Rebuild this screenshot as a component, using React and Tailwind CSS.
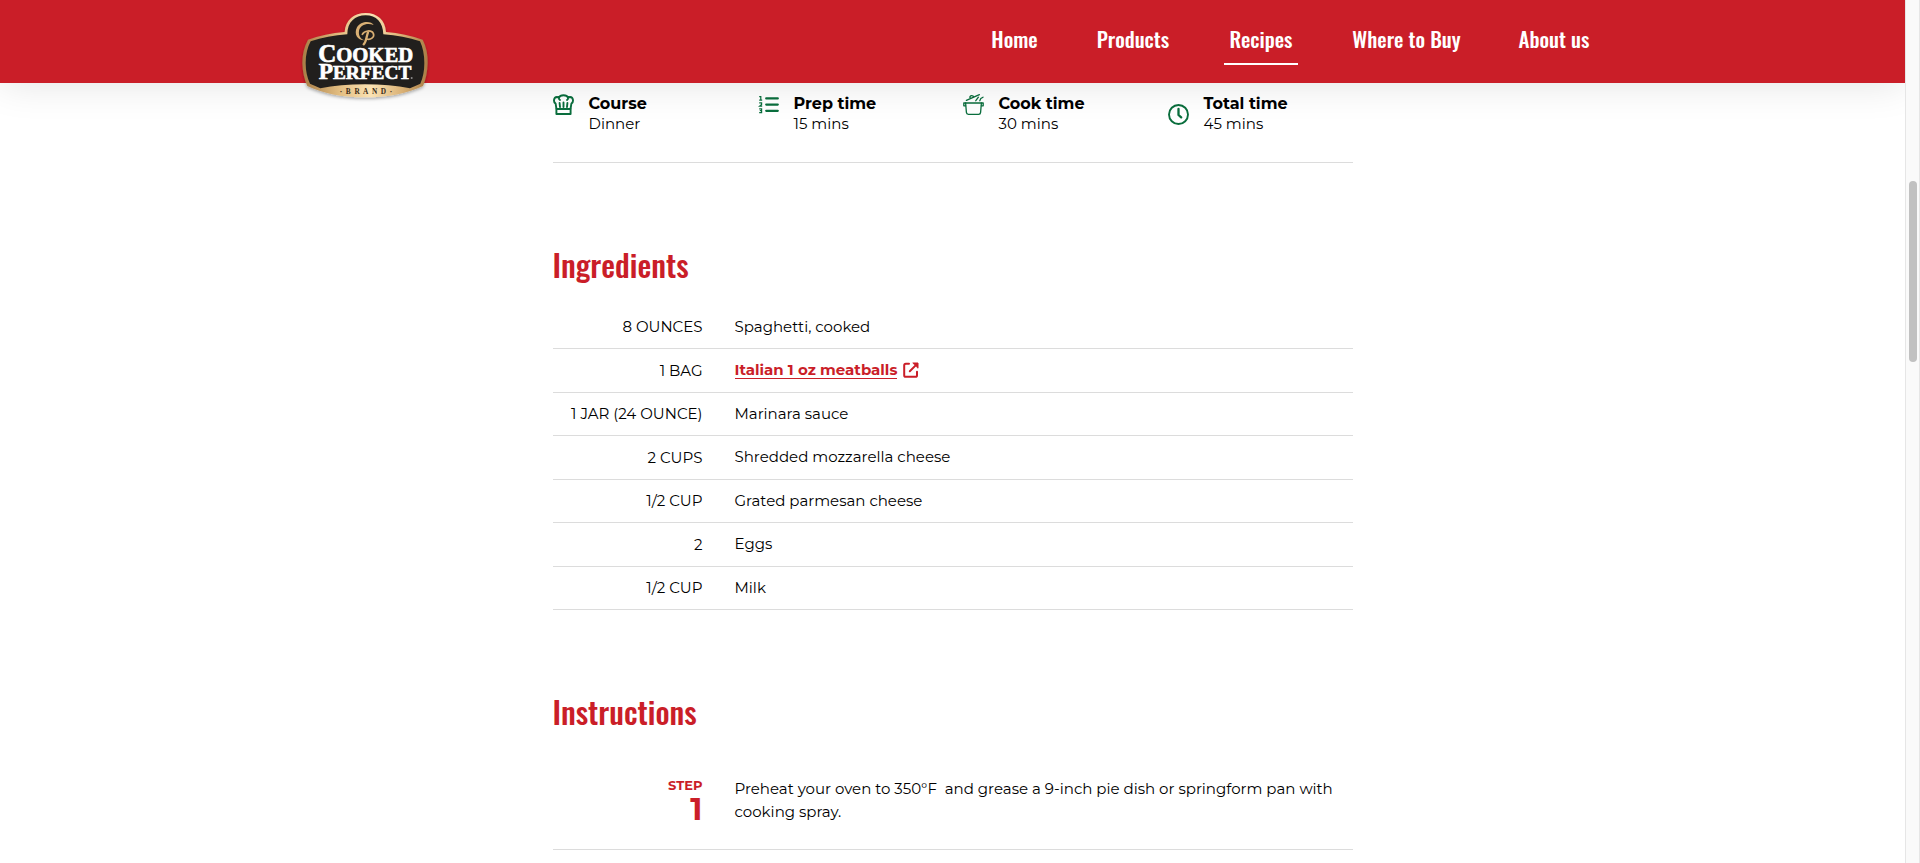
import React from 'react';

const navItems = [
  { label: 'Home', width: 'w-[55px]' },
  { label: 'Products', width: 'w-[82px]' },
  { label: 'Recipes', width: 'w-[74px]', active: true },
  { label: 'Where to Buy', width: 'w-[117px]' },
  { label: 'About us', width: 'w-[78px]' },
];

const ingredients = [
  { amount: '8 ounces', name: 'Spaghetti, cooked' },
  { amount: '1 bag', name: 'Italian 1 oz meatballs', link: true },
  { amount: '1 jar (24 ounce)', name: 'Marinara sauce' },
  { amount: '2 cups', name: 'Shredded mozzarella cheese' },
  { amount: '1/2 cup', name: 'Grated parmesan cheese' },
  { amount: '2', name: 'Eggs' },
  { amount: '1/2 cup', name: 'Milk' },
];

function Logo() {
  return (
    <svg viewBox="30 30 390 282" className="w-[130px] h-[94px]" role="img" aria-label="Cooked Perfect Brand">
      <defs>
        <linearGradient id="gold" x1="0" y1="0" x2="1" y2="0">
          <stop offset="0" stopColor="#a87d45" />
          <stop offset="0.3" stopColor="#e3be82" />
          <stop offset="0.55" stopColor="#fbe3b4" />
          <stop offset="0.8" stopColor="#d9b074" />
          <stop offset="1" stopColor="#a87d45" />
        </linearGradient>
        <filter id="drop" x="-10%" y="-10%" width="120%" height="125%">
          <feDropShadow dx="0" dy="5" stdDeviation="5" floodColor="#000" floodOpacity="0.3" />
        </filter>
      </defs>
      <path
        filter="url(#drop)"
        fill="url(#gold)"
        d="M54 119 Q105 101 164 96 C166 60 192 39 227 39 C262 39 286 61 288 96 Q346 101 398 119 Q414 150 413 189 Q412 228 399 258 C354 280 294 292 225 292 C156 292 97 280 52 258 Q38 228 37 189 Q37 150 54 119 Z"
      />
      <path
        fill="#211f1d"
        d="M62 124 Q112 108 172 103 C172 66 195 46 227 46 C259 46 279 67 280 103 Q340 108 390 124 Q403 152 403 189 Q403 224 391 251 L360 265 Q300 253 225 253 Q150 253 91 265 L60 251 Q47 224 47 189 Q47 152 62 124 Z"
      />
      <path fill="#d9b074" d="M251 75 C244 62 212 62 201 82 C190 104 204 122 224 121 C211 117 205 106 207 93 C210 75 231 68 251 75 Z" />
      <path fill="none" stroke="#d9b074" strokeWidth="5" strokeLinecap="round" d="M217 103 C223 91 244 89 250 100 C255 112 241 121 230 117" />
      <path fill="none" stroke="#d9b074" strokeWidth="7" strokeLinecap="round" d="M234 97 C229 110 229 126 221 133" />
      <g fill="#fff" fontFamily="'Liberation Serif', serif" fontWeight="700">
        <text x="227" y="185" textAnchor="middle" fontSize="75" stroke="#fff" strokeWidth="2">
          C<tspan fontSize="62">OOKED</tspan>
        </text>
        <text x="225" y="237" textAnchor="middle" fontSize="70" stroke="#fff" strokeWidth="2">
          P<tspan fontSize="58">ERFECT</tspan>
        </text>
      </g>
      <circle cx="365" cy="234" r="3" fill="#8d8c8b" />
      <text x="228" y="281" textAnchor="middle" fontSize="22" fontWeight="700" fill="#3a2b17" fontFamily="'Liberation Serif', serif">
        ·&nbsp; B&nbsp; R&nbsp; A&nbsp; N&nbsp; D&nbsp; ·
      </text>
    </svg>
  );
}

function ChefHatIcon() {
  return (
    <svg viewBox="0 0 21 21" className="size-[21px] shrink-0" fill="none" stroke="#0a6e3d" strokeWidth="1.9" strokeLinejoin="round" strokeLinecap="round">
      <path d="M3.4 14.5 L2.6 9.6 C0.3 8.2 0.3 3.3 4 3 C4.8 3 5.4 3.2 5.9 3.6 C7.2 0.4 13.8 0.4 15.1 3.6 C15.6 3.2 16.2 3 17 3 C20.7 3.3 20.7 8.2 18.4 9.6 L17.6 14.5" />
      <path d="M5.9 3.6 C5.8 4.6 6.2 5.5 7 6 M15.1 3.6 C15.2 4.6 14.8 5.5 14 6" />
      <path d="M6.6 9 L7 13 M10.5 8.4 V13 M14.4 9 L14 13" />
      <path d="M3.4 15 H17.6 V20 H3.4 Z" />
    </svg>
  );
}

function ListIcon() {
  return (
    <svg viewBox="0 0 21 21" className="size-[21px] shrink-0" fill="none" stroke="#0a6e3d">
      <path strokeWidth="2.2" strokeLinecap="round" d="M8.2 4.4 H19.8 M8.2 10.6 H19.8 M8.2 16.8 H19.8" />
      <path strokeWidth="1.2" d="M1.2 2.6 H2.8 V6.2 M1.2 6.2 H4.2 M1.2 8.8 H3.6 V10.4 L1.6 12.2 H4.2 M1.2 14.8 H3.6 V18.6 H1.2 M1.8 16.7 H3.6" />
    </svg>
  );
}

function PotIcon() {
  return (
    <svg viewBox="0 0 21 21" className="size-[21px] shrink-0" fill="none" stroke="#0a6e3d" strokeWidth="1.3" strokeLinejoin="round" strokeLinecap="round">
      <path d="M0.8 9 H20.2 V11.8 H18.4 M0.8 9 V11.8 H2.6" />
      <path d="M2.6 9 L3.4 18.4 C3.5 19.7 4.3 20.3 5.4 20.3 H15.6 C16.7 20.3 17.5 19.7 17.6 18.4 L18.4 9" />
      <path d="M3.4 6.4 L16.4 0.7 M7.4 4.6 C6.2 2.8 7.5 1.4 9 1.6 C10.1 1.7 10.5 2.5 10.2 3.3" />
      <path d="M12.8 6.7 L15.4 3.2 M16.8 6.7 L17.8 4.5 L20 3.2" />
    </svg>
  );
}

function ClockIcon() {
  return (
    <svg viewBox="0 0 21 21" className="size-[21px] shrink-0" fill="none" stroke="#0a6e3d" strokeLinecap="round" strokeLinejoin="round">
      <circle cx="10.5" cy="10.5" r="9.5" strokeWidth="1.9" />
      <path d="M10.5 5 V11 L13.2 13.4" strokeWidth="2.3" />
    </svg>
  );
}

function ExternalIcon() {
  return (
    <svg viewBox="0 0 16 16" className="size-4" fill="none" stroke="#ca1e28" strokeWidth="2" strokeLinecap="round" strokeLinejoin="round">
      <path d="M6 1.8 H2.8 Q1.2 1.8 1.2 3.4 V13.2 Q1.2 14.8 2.8 14.8 H12.4 Q14 14.8 14 13.2 V9.8" />
      <path d="M6.8 9.2 L13.4 2.6" />
      <path d="M10.2 1 H15 V5.8 Z" fill="#ca1e28" strokeWidth="1" />
    </svg>
  );
}

const facts = [
  { title: 'Course', value: 'Dinner', icon: <ChefHatIcon />, align: 'items-start' },
  { title: 'Prep time', value: '15 mins', icon: <ListIcon />, align: 'items-start' },
  { title: 'Cook time', value: '30 mins', icon: <PotIcon />, align: 'items-start' },
  { title: 'Total time', value: '45 mins', icon: <ClockIcon />, align: 'items-center' },
];

function Header() {
  return (
    <header className="relative z-10 h-[83px] bg-[#ca1e28] shadow-[0_0_40px_rgba(0,0,0,0.12)]">
      <div className="max-w-[1305px] mx-auto flex items-start justify-between pr-3">
        <a href="#" className="block pt-[10px]">
          <Logo />
        </a>
        <nav className="flex gap-[50px] pt-6 font-['Oswald','Liberation_Sans_Narrow',sans-serif] text-[21px] leading-[30px] font-medium text-white">
          {navItems.map((item) => (
            <a
              key={item.label}
              href="#"
              className={`${item.width} flex justify-center pb-[9px] whitespace-nowrap border-b-2 ${item.active ? 'border-white' : 'border-transparent'}`}
            >
              {item.label}
            </a>
          ))}
        </nav>
      </div>
    </header>
  );
}

function SectionTitle({ children }) {
  return (
    <h2 className="font-['Oswald','Liberation_Sans_Narrow',sans-serif] text-[31px] leading-10 font-medium text-[#ca1e28]">
      {children}
    </h2>
  );
}

export default function App() {
  return (
    <div className="flex min-h-screen bg-white font-['Montserrat','Inter',sans-serif] text-[15px] text-black">
      <div className="flex-1 min-w-0 overflow-hidden">
        <Header />

        <main className="max-w-[800px] mx-auto">
          <section className="grid grid-cols-4 gap-5 pt-[11px] pb-7 border-b border-[#dcdcdc]">
            {facts.map((fact) => (
              <div key={fact.title} className={`flex gap-[15px] leading-5 ${fact.align}`}>
                {fact.icon}
                <div>
                  <div className="text-base leading-5 font-bold">{fact.title}</div>
                  <div>{fact.value}</div>
                </div>
              </div>
            ))}
          </section>

          <section className="pt-[81px]">
            <SectionTitle>Ingredients</SectionTitle>
            <table className="w-full mt-[21px] border-collapse">
              <tbody>
                {ingredients.map((item, i) => (
                  <tr key={i} className="h-[43px] even:h-[44px] border-b border-[#dcdcdc]">
                    <td className="w-[150px] pt-[2px] text-right uppercase whitespace-nowrap">{item.amount}</td>
                    <td className="pt-[1px] pl-8">
                      {item.link ? (
                        <a href="#" className="inline-flex items-center gap-[6px] font-bold text-[#ca1e28]">
                          <span className="border-b border-[#ca1e28] leading-[17px]">{item.name}</span>
                          <ExternalIcon />
                        </a>
                      ) : (
                        item.name
                      )}
                    </td>
                  </tr>
                ))}
              </tbody>
            </table>
          </section>

          <section className="pt-[81px]">
            <SectionTitle>Instructions</SectionTitle>
            <ol className="mt-[37px]">
              <li className="flex gap-8 pt-1 pb-6 border-b border-[#dcdcdc]">
                <div className="w-[150px] pt-[5px] text-right font-bold text-[#ca1e28]">
                  <div className="text-[13px] leading-4">STEP</div>
                  <div className="text-[31px] leading-8">1</div>
                </div>
                <p className="flex-1 pt-[5px] leading-[23px]">
                  Preheat your oven to 350°F &nbsp;and grease a 9-inch pie dish or springform pan with cooking spray.
                </p>
              </li>
            </ol>
          </section>
        </main>
      </div>

      <div className="w-[15px] shrink-0 border-x border-[#e6e6e6] bg-[#fafafa] pt-[181px]">
        <div className="mx-auto w-2 h-[181px] rounded-full bg-[#c1c1c1]" />
      </div>
    </div>
  );
}
